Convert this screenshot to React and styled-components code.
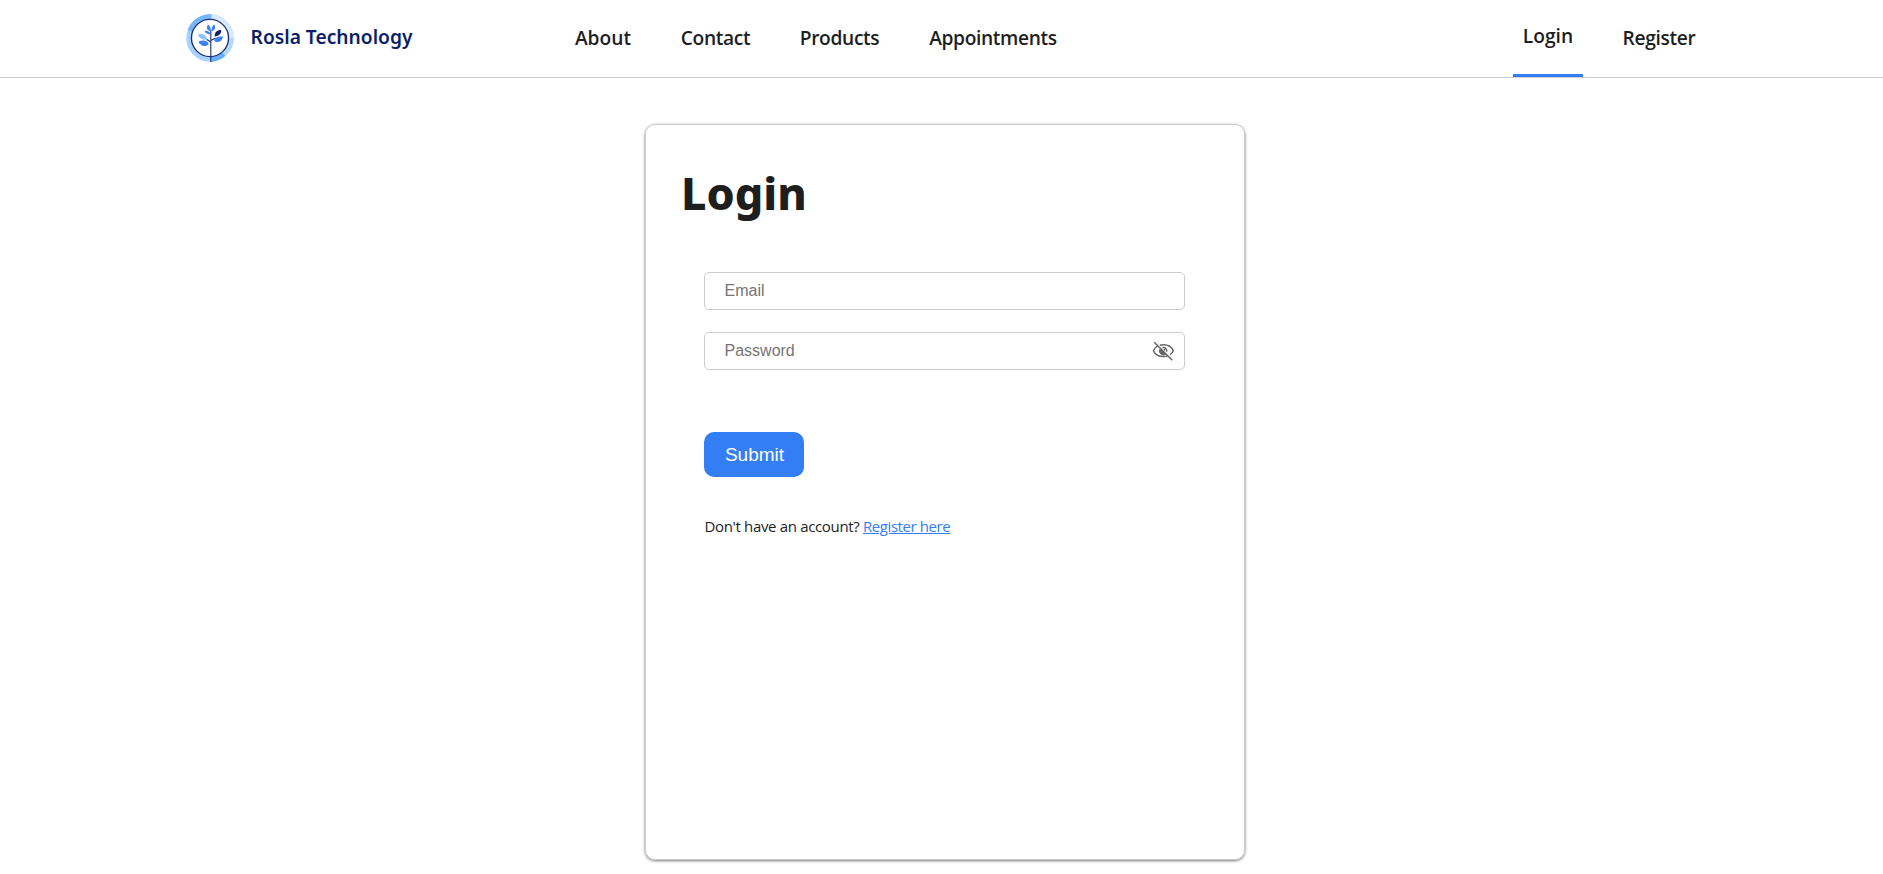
import React from "react";
import styled, { createGlobalStyle } from "styled-components";

const Global = createGlobalStyle`
  *, *::before, *::after { box-sizing: border-box; }
  body { margin: 0; background: #fff; color: #1e1e1e; font-family: "Open Sans", sans-serif; }
`;

const Page = styled.div`
  min-height: 100vh;
`;
const Header = styled.header`
  display: flex;
  height: 78px;
  padding: 0 178px 0 186px;
  border-bottom: 1px solid #cccccc;
`;
const Brand = styled.a`
  display: flex;
  align-items: center;
  gap: 16.6px;
  width: 379px;
  padding-bottom: 3px;
  color: #0b1f69;
  font: 600 19.2px/28px "Noto Sans", sans-serif;
  svg { width: 48px; height: 48px; margin-top: 2px; }
`;
const Nav = styled.nav`
  display: flex;
  gap: 30px;
`;
const AuthNav = styled(Nav)`
  margin-left: auto;
`;
const NavLink = styled.a`
  display: flex;
  align-items: center;
  justify-content: center;
  width: ${(p) => p.$width}px;
  padding-bottom: ${(p) => (p.$active ? 3 : 2)}px;
  border-bottom: ${(p) => (p.$active ? "3px solid #337ef5" : "0")};
  font-size: 19.2px;
  font-weight: 600;
  letter-spacing: ${(p) => p.$track || 0}px;
`;
const Card = styled.main`
  width: 600px;
  height: 736px;
  margin: 46px 0 0 645px;
  padding: 37px 59px 0 58px;
  border: 1px solid #cccccc;
  border-radius: 10px;
  box-shadow: 0 1px 3px rgba(0, 0, 0, 0.55);
`;
const Title = styled.h1`
  margin: 0 0 49px -23px;
  font: 800 44.8px/61px "Noto Sans", sans-serif;
`;
const Form = styled.form`
  display: flex;
  flex-direction: column;
  align-items: flex-start;
`;
const Field = styled.label`
  display: flex;
  align-items: center;
  width: 481px;
  height: 38px;
  margin-bottom: 22px;
  padding: 0 9.5px 0 19.5px;
  border: 1px solid #cccccc;
  border-radius: 5px;
  color: #666;
`;
const Input = styled.input`
  flex: 1;
  padding: 0;
  border: 0;
  outline: 0;
  background: transparent;
  font: 16px "Liberation Sans", Arial, sans-serif;
  &::placeholder { color: #757575; }
`;
const Submit = styled.button`
  width: 100px;
  height: 45px;
  margin: 40px 0 37px;
  padding: 0 0 0 1px;
  border: 0;
  border-radius: 10px;
  background: #337ef5;
  color: #fff;
  font: 19px "Liberation Sans", Arial, sans-serif;
`;
const Note = styled.p`
  margin: 0;
  padding-left: 0.5px;
  font-size: 15px;
  letter-spacing: -0.34px;
  line-height: 24px;
  white-space: pre;
`;
const RegisterLink = styled.a`
  color: #337ef5;
  letter-spacing: -0.42px;
  text-decoration: underline;
`;

const HiddenEye = () => (
  <svg width="24" height="24" viewBox="0 0 24 24" fill="none" stroke="#666" strokeWidth="1.5" aria-hidden="true">
    <path d="M6.8 6.9C4.700 8 3.200 9.700 2.400 11.700C4 15.400 7.800 17.600 12.400 17.600C14.200 17.600 15.800 17.300 17.200 16.600" />
    <path d="M8.800 6.200C10 5.800 11.200 5.700 12.400 5.700C17 5.700 20.700 8 22.300 11.700C21.600 13.300 20.500 14.700 19 15.700" />
    <path d="M9.300 9.300A4 4 0 0 0 15.100 15.100Z" fill="#666" stroke="none" />
    <path d="M11.400 8.700A3.300 3.300 0 0 1 15.600 12.800M12.800 10.300L14 11.500" />
    <path d="M3.200 3.300L21.200 21.300" />
  </svg>
);

const Logo = () => (
  <svg viewBox="0 0 60 60" fill="none" aria-hidden="true">
    <g strokeWidth="6.5">
      <circle cx="30" cy="30" r="26.4" stroke="#a6d3ff" />
      <path d="M5.2 21A26.4 26.4 0 0 1 32 3.7" stroke="#74b5fb" />
      <path d="M32 3.7A26.4 26.4 0 0 1 56.4 30" stroke="#d6eaff" />
      <path d="M56.4 30A26.4 26.4 0 0 1 47 50" stroke="#b3d9ff" />
      <path d="M47 50A26.4 26.4 0 0 1 31 56.4" stroke="#66adfa" />
    </g>
    <circle cx="30" cy="30" r="23.2" fill="#fff" stroke="#1c2f75" strokeWidth="1.7" />
    <path d="M31 20V60M31 33L37 30M31 35L26 32" stroke="#1c2f75" strokeWidth="1.4" />
    <path d="M30.5 21.5C26 20.5 25 17 27.5 13C30.5 15 31.5 18 30.5 21.5Z" fill="#3b82f6" />
    <path d="M32 21.5C31.5 18 32.5 15 35.5 13C37.5 17 36 20.5 32 21.5Z" fill="#3b82f6" />
    <path d="M30.5 25.5C27 25.5 24 24 23 21C27 20.5 30 22 30.5 25.5Z" fill="#3b82f6" />
    <path d="M26.5 32C20 32.5 16 30 15 25.5C21 24 26 26.5 26.5 32Z" fill="#8bc5ff" />
    <path d="M28.5 37.5C25 41.5 18 41 15.5 34.5C22 32 27 33.5 28.5 37.5Z" fill="#3b82f6" />
    <path d="M36 28C35.5 23 38.5 20 44 20C44 25 41 27.5 36 28Z" fill="#0d1f66" />
    <path d="M35 33C37 28.5 41 27.5 46.5 28.5C44.5 35 39 37 35 33Z" fill="#3b82f6" />
  </svg>
);

export default function App() {
  return (
    <Page>
      <Global />
      <Header>
        <Brand><Logo />Rosla Technology</Brand>
        <Nav>
          <NavLink $width={76}>About</NavLink>
          <NavLink $width={89} $track={-0.35}>Contact</NavLink>
          <NavLink $width={99} $track={-0.35}>Products</NavLink>
          <NavLink $width={148} $track={-0.35}>Appointments</NavLink>
        </Nav>
        <AuthNav>
          <NavLink $width={70} $active>Login</NavLink>
          <NavLink $width={92} $track={-0.35}>Register</NavLink>
        </AuthNav>
      </Header>
      <Card>
        <Title>Login</Title>
        <Form>
          <Field><Input type="email" placeholder="Email" /></Field>
          <Field>
            <Input type="password" placeholder="Password" />
            <HiddenEye />
          </Field>
          <Submit type="button">Submit</Submit>
          <Note>Don't have an account? <RegisterLink>Register here</RegisterLink></Note>
        </Form>
      </Card>
    </Page>
  );
}
